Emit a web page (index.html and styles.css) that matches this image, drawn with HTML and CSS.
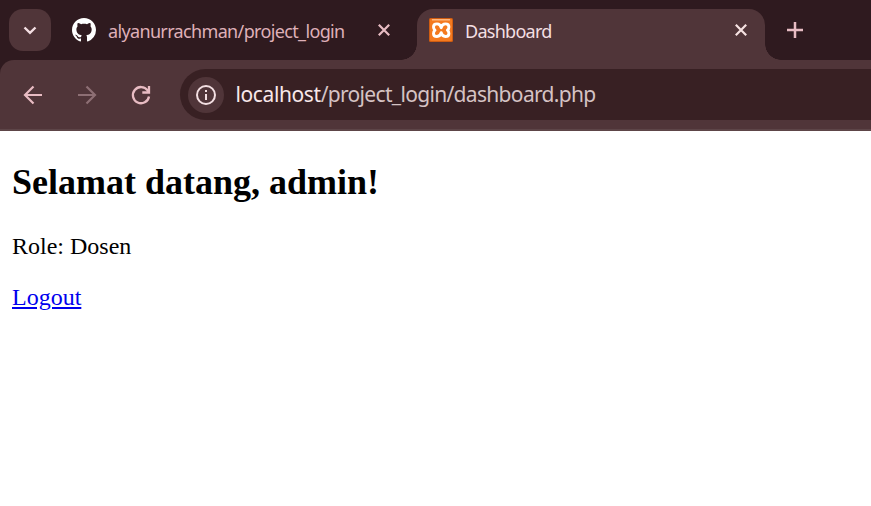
FILE: index.html
```html
<!DOCTYPE html>
<html lang="id">
<head>
<meta charset="utf-8">
<title>Dashboard</title>
<link rel="stylesheet" href="styles.css">
</head>
<body>
<div class="tabstrip">
  <div class="tab-search"><svg width="42" height="42" viewBox="0 0 42 42"><path d="M15.5 18.5l5.500 5.300 5.500-5.300" fill="none" stroke="#f3dfe2" stroke-width="2.4"/></svg></div>
  <div class="tab">
    <svg class="favicon" viewBox="0 0 16 16"><path fill="#fff" d="M8 0C3.58 0 0 3.58 0 8c0 3.54 2.29 6.53 5.47 7.59.4.07.55-.17.55-.38 0-.19-.01-.82-.01-1.49-2.01.37-2.53-.49-2.69-.94-.09-.23-.48-.94-.82-1.13-.28-.15-.68-.52-.01-.53.63-.01 1.08.58 1.23.82.72 1.21 1.87.87 2.33.66.07-.52.28-.87.51-1.07-1.78-.2-3.64-.89-3.64-3.95 0-.87.31-1.59.82-2.15-.08-.2-.36-1.02.08-2.12 0 0 .67-.21 2.2.82.64-.18 1.32-.27 2-.27s1.36.09 2 .27c1.53-1.04 2.2-.82 2.2-.82.44 1.1.16 1.92.08 2.12.51.56.82 1.27.82 2.15 0 3.07-1.87 3.75-3.65 3.95.29.25.54.73.54 1.48 0 1.07-.01 1.93-.01 2.2 0 .21.15.46.55.38A8.01 8.01 0 0 0 16 8c0-4.42-3.58-8-8-8z"/></svg>
    <span class="title title-repo">alyanurrachman/project_login</span>
    <svg class="close" viewBox="0 0 12 12"><path d="M.8.8l10.4 10.4M11.2.8L.8 11.2" fill="none" stroke="#e8bcc3" stroke-width="2.2"/></svg>
  </div>
  <div class="tab active">
    <svg class="favicon" viewBox="0 0 24 24"><rect width="24" height="24" rx="1.5" fill="#cf5d12"/><rect x="1" y="1" width="22" height="22" rx="1" fill="#f47a20"/><path d="M3 1.800h18" stroke="#ffc28f" stroke-width="1.300"/><path d="M12.200 9.700C11.500 6.800 9.800 5.900 8 5.900C5.700 5.900 4.500 7.300 4.500 8.900C4.500 10.600 5.300 11.500 6 12.200C5.100 12.900 4.500 13.800 4.500 15.400C4.500 17.400 6.100 18.500 8 18.500C9.900 18.500 11.500 17.500 12.200 14.700C12.900 17.500 14.500 18.500 16.400 18.500C18.500 18.500 19.900 17.200 19.900 15.400C19.900 13.800 19.300 12.900 18.400 12.200C19.300 11.500 19.900 10.500 19.900 8.900C19.900 7.200 18.700 5.900 16.400 5.900C14.600 5.900 12.900 6.800 12.200 9.700" fill="none" stroke="#fff" stroke-width="2.900" stroke-linejoin="round" stroke-linecap="round"/></svg>
    <span class="title title-page">Dashboard</span>
    <svg class="close" viewBox="0 0 12 12"><path d="M.8.8l10.4 10.4M11.2.8L.8 11.2" fill="none" stroke="#f6e2e2" stroke-width="2.2"/></svg>
  </div>
  <svg class="new-tab" viewBox="0 0 16 16"><path d="M8 0v16M0 8h16" stroke="#e8bcc3" stroke-width="2.500"/></svg>
</div>
<div class="toolbar">
  <svg class="nav" viewBox="0 0 24 24"><path d="M21 12H4M12.500 3.500L4 12l8.500 8.500" fill="none" stroke="#e8bcc3" stroke-width="2.200"/></svg>
  <svg class="nav" viewBox="0 0 24 24"><path d="M3 12h17M11.500 3.500l8.500 8.500-8.500 8.500" fill="none" stroke="#8d6f74" stroke-width="2.200"/></svg>
  <svg class="nav" viewBox="0 0 24 24"><path d="M20 13.500A8.100 8.100 0 1 1 18.600 7.400L20 9M20 3v6.500h-6.700" fill="none" stroke="#e8bcc3" stroke-width="2.300"/></svg>
  <div class="address">
    <div class="info"><svg width="36" height="36" viewBox="0 0 36 36"><circle cx="18" cy="18" r="9" fill="none" stroke="#f3dfe2" stroke-width="2"/><path d="M18 17v6M18 13v2.100" stroke="#f3dfe2" stroke-width="2"/></svg></div>
    <span class="url"><b>localhost</b>/project_login/dashboard.php</span>
  </div>
</div>
<main>
  <h2>Selamat datang, admin!</h2>
  <p>Role: Dosen</p>
  <a href="#">Logout</a>
</main>
</body>
</html>
```
FILE: styles.css
```css
* { box-sizing: border-box; }
body { margin: 0; background: #fff; overflow: hidden; }
svg { display: block; flex: none; }
.tabstrip { display: flex; height: 60px; background: #2f1a1f; font-family: "Noto Sans", sans-serif; }
.tab-search { width: 42px; height: 42px; margin: 9px 9px 0; background: #503539; border-radius: 14px; flex: none; }
.tab { display: flex; position: relative; width: 357px; height: 51px; margin-top: 9px; padding-left: 12px; flex: none; }
.tab.active { width: 348px; background: #503539; border-radius: 16px 16px 0 0; }
.tab.active::before, .tab.active::after { content: ""; position: absolute; bottom: 0; width: 16px; height: 16px; }
.tab.active::before { right: 100%; background: radial-gradient(circle at 0 0, #2f1a1f 15.5px, #503539 16px); }
.tab.active::after { left: 100%; background: radial-gradient(circle at 100% 0, #2f1a1f 15.5px, #503539 16px); }
.favicon { width: 24px; height: 24px; margin: 9px 12px 0 0; }
.title { width: 270px; font-size: 18px; line-height: 24px; margin-top: 10px; white-space: nowrap; }
.title-repo { color: #dfb0b8; letter-spacing: -.65px; }
.title-page { color: #f3dfe2; letter-spacing: -.72px; }
.close { width: 12px; height: 12px; margin-top: 15px; }
.new-tab { width: 16px; height: 16px; margin: 22px 0 0 22px; }
.toolbar { display: flex; align-items: center; height: 71px; padding-left: 21px; background: #503539; border-bottom: 2px solid #5d4548; border-top-left-radius: 14px; box-shadow: -14px -14px 0 #2f1a1f; clip-path: inset(0); }
.nav { width: 24px; height: 24px; margin: 1px 30px 0 0; }
.address { display: flex; align-items: center; flex: 1; height: 51px; margin-left: -3px; padding-left: 7.5px; background: #382023; border-radius: 26px 0 0 26px; }
.info { width: 36px; height: 36px; border-radius: 50%; background: #503539; flex: none; }
.url { margin: 0 0 1px 12px; font: 21px/30px "Noto Sans", sans-serif; letter-spacing: -.68px; color: #d5c3c4; white-space: nowrap; }
.url b { font-weight: 400; color: #f8e8ea; letter-spacing: -.4px; }
main { padding: 0 12px; font: 24px/27px "Liberation Serif", serif; color: #000; }
h2 { margin: 0; padding-top: 31px; font-size: 36px; line-height: 41px; }
p { margin: 30px 0 24px; }
a { color: #0000ee; }
```
